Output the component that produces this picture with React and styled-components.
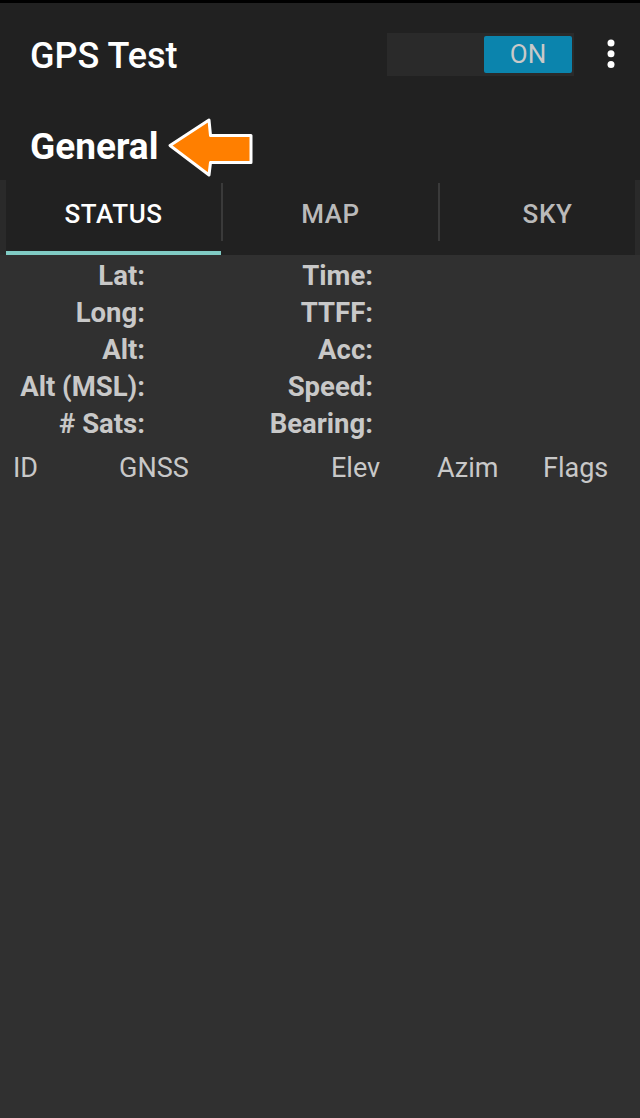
import React from 'react';
import styled, { createGlobalStyle } from 'styled-components';

const GlobalStyle = createGlobalStyle`
  html, body {
    margin: 0;
    padding: 0;
    background: #303030;
  }
  body {
    font-family: Roboto, "Noto Sans", sans-serif;
  }
  #root {
    min-height: 100vh;
  }
`

const Page = styled.div`
    min-height: 100vh;
    background: #303030;
    display: flex;
    flex-direction: column;
`

const AppBar = styled.header`
    background: #212121;
    border-top: 3px solid #000;
`

const Toolbar = styled.div`
    height: 102px;
    display: flex;
    align-items: center;
    padding-left: 30px;
`

const Title = styled.h1`
    margin: 0;
    padding-top: 3px;
    flex: 1;
    font-size: 36px;
    font-weight: 500;
    color: #fff;
`

const SwitchTrack = styled.div`
    width: 187px;
    height: 43px;
    box-sizing: border-box;
    padding-right: 2px;
    background: #2a2a2a;
    display: flex;
    justify-content: flex-end;
    align-items: center;
`

const SwitchThumb = styled.div`
    width: 88px;
    height: 37px;
    border-radius: 2px;
    background: #0b84ad;
    color: #c9c9c9;
    font-size: 26px;
    display: flex;
    align-items: center;
    justify-content: center;
`

const MenuIcon = styled.svg`
    margin-left: 33px;
    margin-right: 25px;
`

const SubtitleRow = styled.div`
    height: 75px;
    box-sizing: border-box;
    padding: 8px 0 0 30px;
    display: flex;
    align-items: center;
`

const Subtitle = styled.h2`
    margin: 0;
    font-size: 37px;
    font-weight: 700;
    color: #fff;
`

const Arrow = styled.svg`
    margin-left: 7px;
    margin-top: 2px;
`

const TabStrip = styled.div`
    background: #2a2a2a;
    padding: 0 5px 0 6px;
`

const TabRow = styled.div`
    display: flex;
    overflow: hidden;
    height: 75px;
    background: #212121;
`

const Tab = styled.div`
    flex: 0 0 215px;
    box-sizing: border-box;
    display: flex;
    align-items: center;
    justify-content: center;
    padding-bottom: 3px;
    border-bottom: 4px solid ${p => p.$active ? '#80cbc4' : 'transparent'};
    color: ${p => p.$active ? '#fff' : '#bababa'};
    font-size: 26px;
    font-weight: 500;
    letter-spacing: 0.6px;
`

const TabDivider = styled.div`
    flex: 0 0 2px;
    height: 58px;
    margin-top: 3px;
    background: #3a3a3a;
`

const StatusGrid = styled.div`
    display: grid;
    grid-template-columns: 145px 83px 145px 1fr;
    grid-auto-rows: 37px;
    padding-top: 2px;
`

const Label = styled.div`
    text-align: right;
    white-space: nowrap;
    font-size: 27.5px;
    font-weight: 700;
    line-height: 37px;
    color: #c8c8c8;
`

const Value = styled.div`
    font-size: 27px;
    line-height: 37px;
    color: #c8c8c8;
`

const SatHeader = styled.div`
    display: flex;
    margin-top: 8px;
    padding-left: 13px;
    font-size: 27px;
    line-height: 37px;
    color: #c8c8c8;
`

const SatCol = styled.div`
    flex: 0 0 ${p => p.$w ? p.$w + 'px' : 'auto'};
`

const rows = [
    ['Lat:', 'Time:'],
    ['Long:', 'TTFF:'],
    ['Alt:', 'Acc:'],
    ['Alt (MSL):', 'Speed:'],
    ['# Sats:', 'Bearing:'],
]

const satCols = [
    ['ID', 106],
    ['GNSS', 212],
    ['Elev', 106],
    ['Azim', 106],
    ['Flags', 0],
]

const App = () => {
    return (<>
        <GlobalStyle />
        <Page>
            <AppBar>
                <Toolbar>
                    <Title>GPS Test</Title>
                    <SwitchTrack>
                        <SwitchThumb>ON</SwitchThumb>
                    </SwitchTrack>
                    <MenuIcon width="8" height="30" viewBox="0 0 8 30">
                        <circle cx="4" cy="4" r="3.5" fill="#fff" />
                        <circle cx="4" cy="14.7" r="3.5" fill="#fff" />
                        <circle cx="4" cy="25.4" r="3.5" fill="#fff" />
                    </MenuIcon>
                </Toolbar>
                <SubtitleRow>
                    <Subtitle>General</Subtitle>
                    <Arrow width="92" height="66" viewBox="0 0 92 66">
                        <polygon
                            points="5,30.5 44,5 45.5,20.5 86,20.5 86,47.5 45.5,47.5 44,60"
                            fill="#ff7f00"
                            stroke="#fff"
                            strokeWidth="3"
                            strokeLinejoin="round"
                        />
                    </Arrow>
                </SubtitleRow>
            </AppBar>
            <TabStrip>
                <TabRow>
                    <Tab $active>STATUS</Tab>
                    <TabDivider />
                    <Tab>MAP</Tab>
                    <TabDivider />
                    <Tab>SKY</Tab>
                </TabRow>
            </TabStrip>
            <StatusGrid>
                {rows.map(([a, b]) => (
                    <React.Fragment key={a}>
                        <Label>{a}</Label>
                        <Value />
                        <Label>{b}</Label>
                        <Value />
                    </React.Fragment>
                ))}
            </StatusGrid>
            <SatHeader>
                {satCols.map(([name, w]) => <SatCol key={name} $w={w}>{name}</SatCol>)}
            </SatHeader>
        </Page>
    </>)
}

export default App
